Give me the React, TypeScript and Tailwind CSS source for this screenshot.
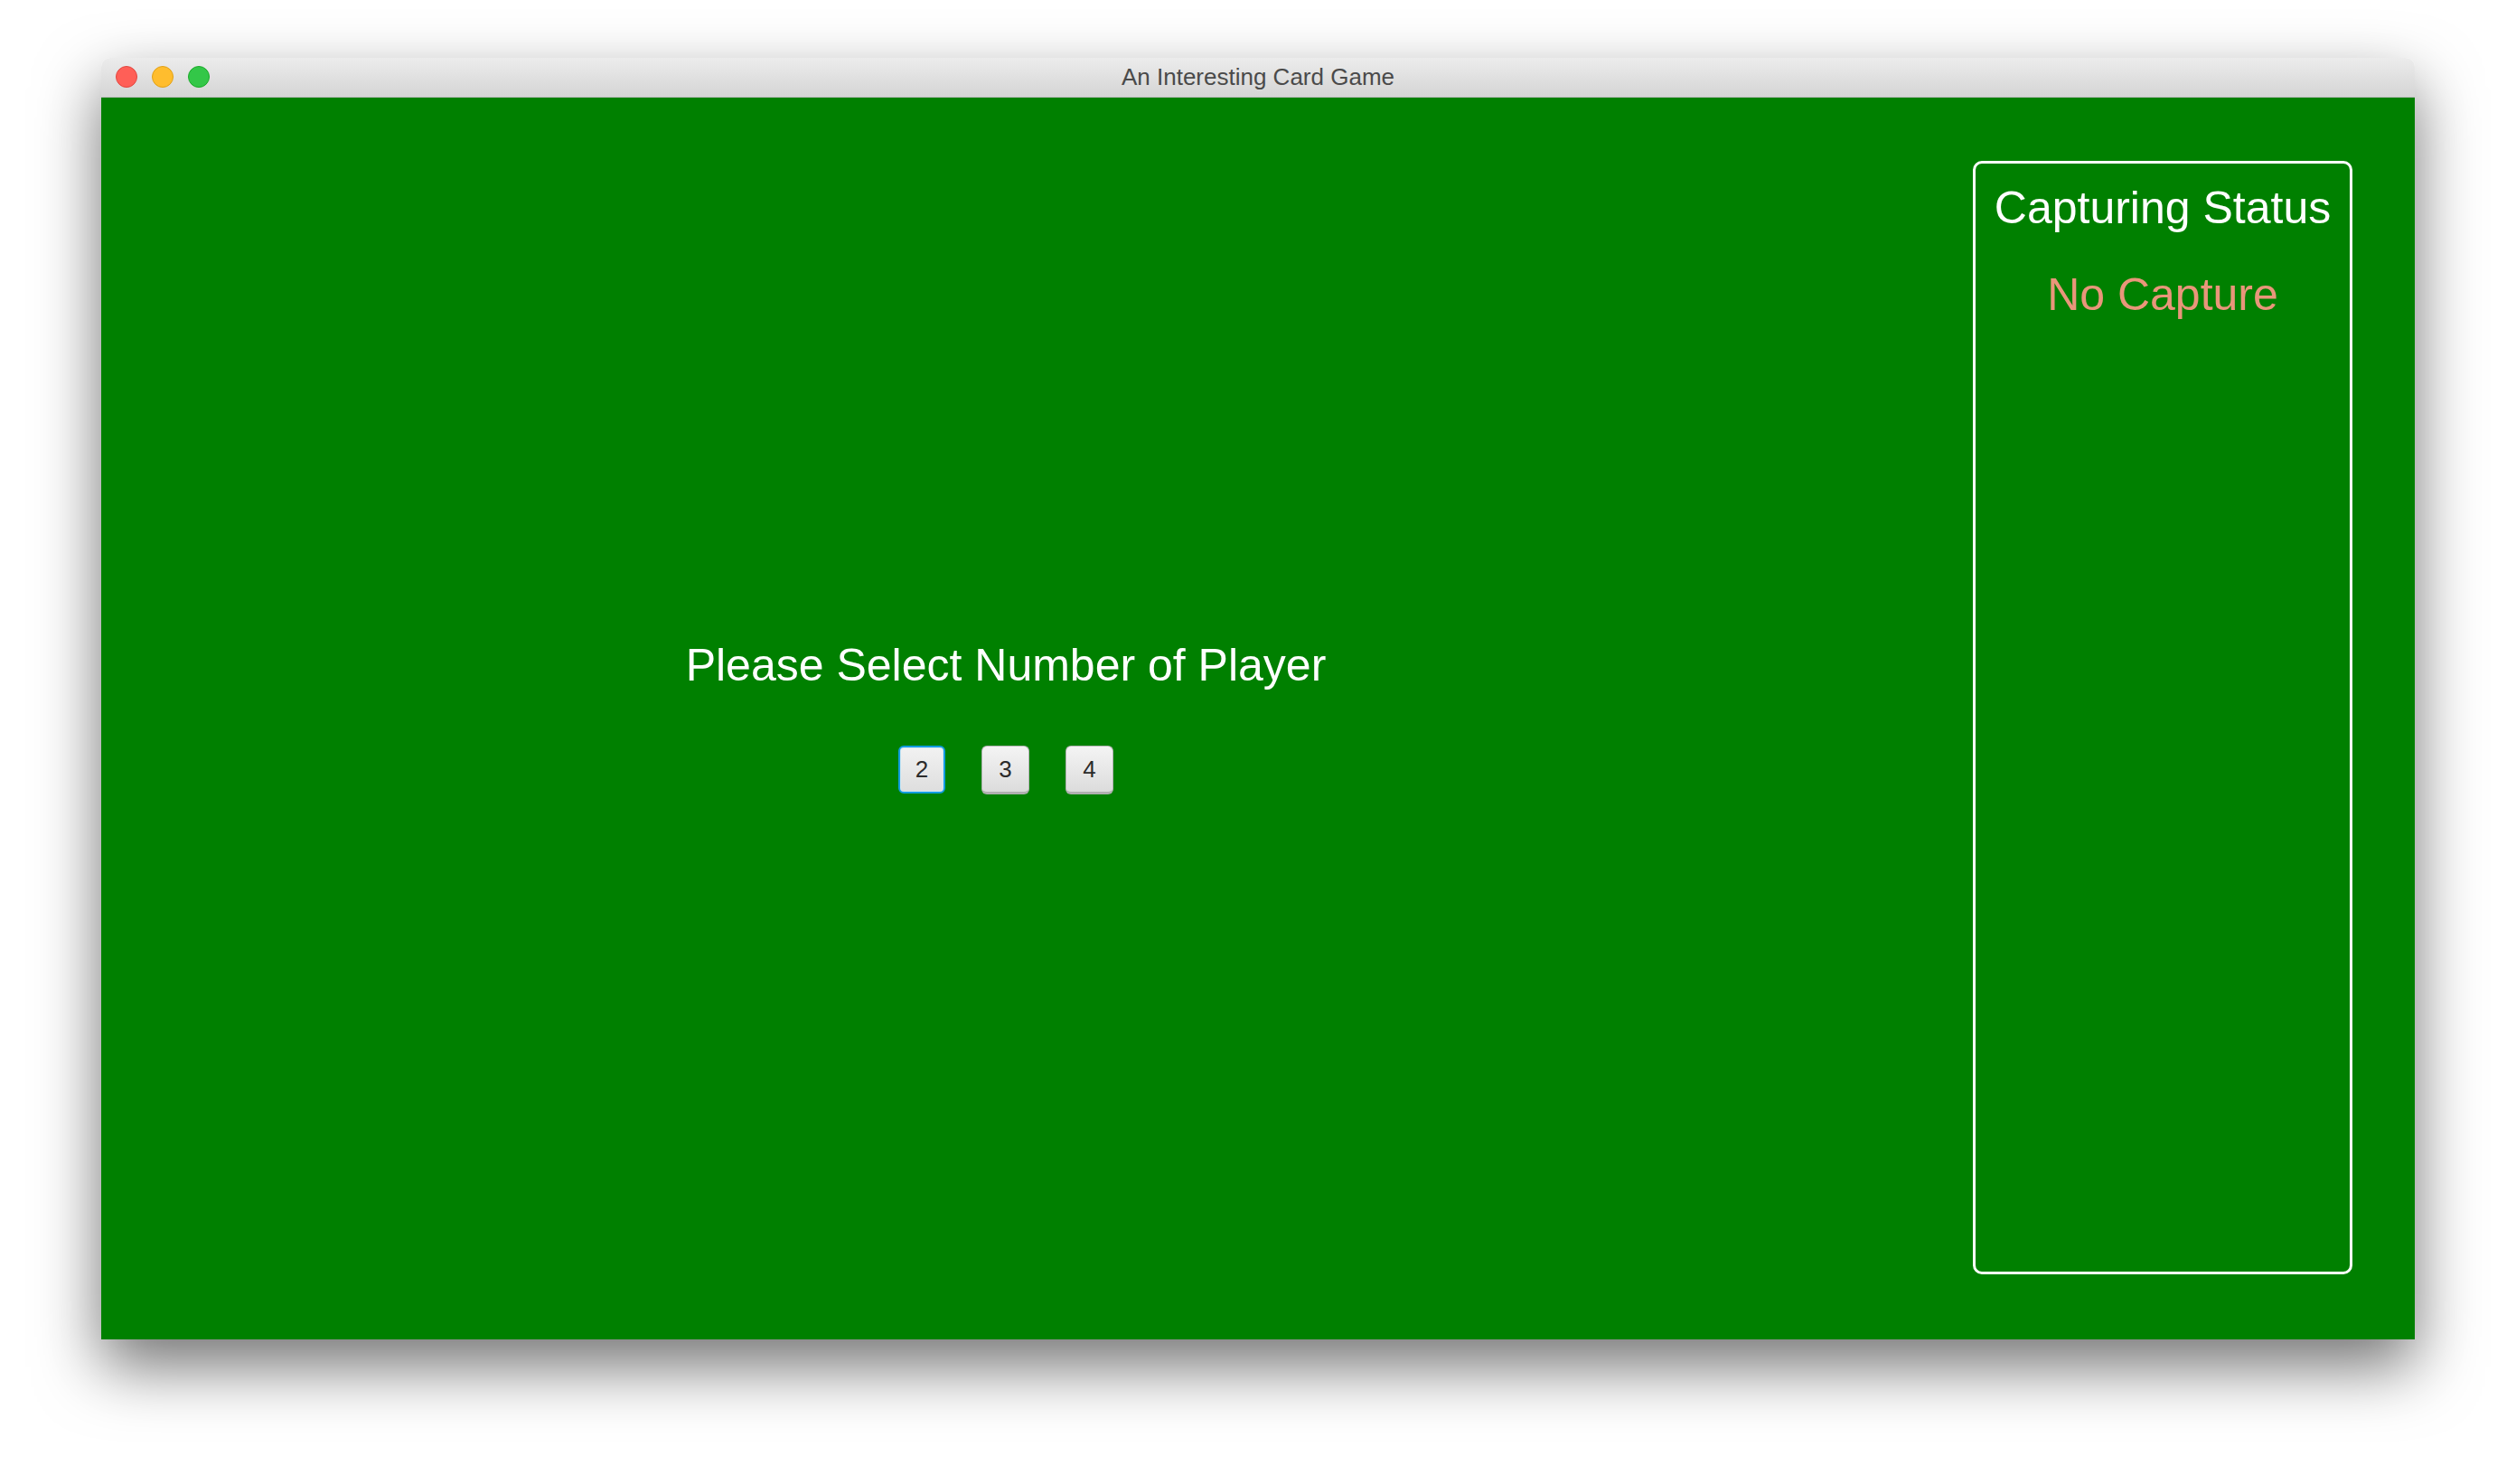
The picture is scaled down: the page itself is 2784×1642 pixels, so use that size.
import React from "react";

const FONT = { fontFamily: '"Liberation Sans", Arial, sans-serif' };

export default function App() {
  return (
    <div className="min-h-screen w-full bg-white pl-[112px] pt-[64px]" style={FONT}>
      <div className="w-[2560px] rounded-t-[10px] shadow-[0_30px_70px_rgba(0,0,0,0.55)]">
        {/* Title bar */}
        <div className="relative flex h-[44px] items-center justify-center rounded-t-[10px] border-b border-[#bdbdbd] bg-gradient-to-b from-[#ececec] to-[#d5d5d5]">
          <div className="absolute left-[16px] top-[9px] flex gap-[16px]">
            <span className="h-[24px] w-[24px] rounded-full border border-[#e2463f] bg-[#ff5f57]" />
            <span className="h-[24px] w-[24px] rounded-full border border-[#e1a116] bg-[#ffbd2e]" />
            <span className="h-[24px] w-[24px] rounded-full border border-[#1aab29] bg-[#33c748]" />
          </div>
          <span className="text-[26px] text-[#4a4a4a]">An Interesting Card Game</span>
        </div>

        {/* Game table */}
        <div className="flex h-[1374px] bg-[#008000]">
          <div className="flex flex-1 flex-col items-center justify-center">
            <h1 className="text-[50px] leading-[50px] text-white">Please Select Number of Player</h1>
            <div className="mt-[64px] flex gap-[40px]">
              <PlayerButton label="2" focused />
              <PlayerButton label="3" />
              <PlayerButton label="4" />
            </div>
          </div>

          <div className="mx-[69px] mb-[72px] mt-[70px] flex w-[420px] flex-col items-center rounded-[10px] border-[3px] border-white pt-[24px]">
            <span className="text-[50px] leading-[50px] text-white">Capturing Status</span>
            <span className="mt-[46px] text-[50px] leading-[50px] text-[#e9967a]">No Capture</span>
          </div>
        </div>
      </div>
    </div>
  );
}

function PlayerButton({ label, focused }: { label: string; focused?: boolean }) {
  return (
    <button
      className={
        focused
          ? "flex h-[53px] w-[52px] items-center justify-center rounded-[6px] border-[2px] border-[#129ce0] bg-gradient-to-b from-[#f2f2f2] to-[#dedede] text-[26px] text-[#2b2b2b] shadow-[inset_0_0_0_1px_#cfe6f2]"
          : "flex h-[54px] w-[53px] items-center justify-center rounded-[6px] border border-[#b4b4b4] border-b-[3px] border-b-[#b0b0b0] bg-gradient-to-b from-[#f4f4f4] to-[#dcdcdc] text-[26px] text-[#2b2b2b]"
      }
    >
      {label}
    </button>
  );
}
